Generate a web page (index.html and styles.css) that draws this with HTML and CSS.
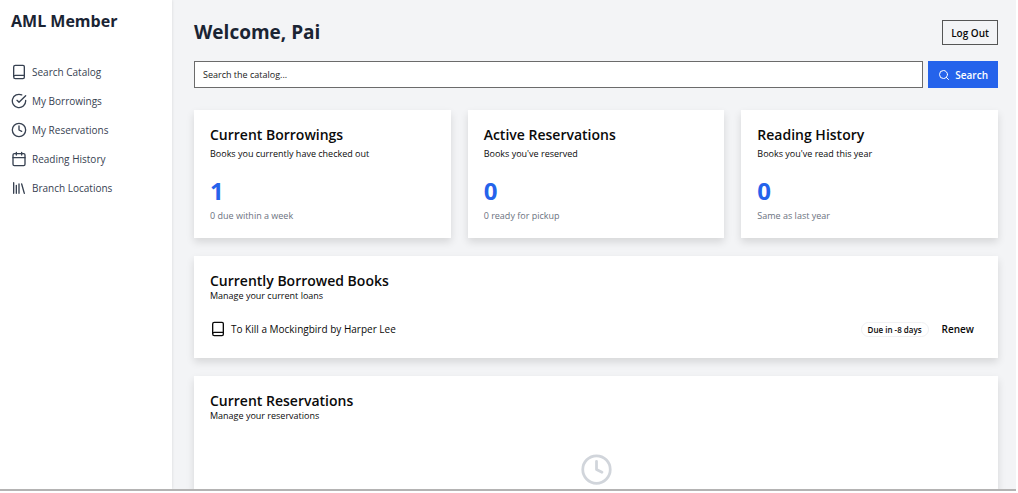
FILE: index.html
```html
<!DOCTYPE html>
<html lang="en">
<head>
<meta charset="utf-8">
<meta name="viewport" content="width=device-width, initial-scale=1">
<title>AML Member</title>
<link rel="stylesheet" href="styles.css">
</head>
<body>
<svg class="sprite" aria-hidden="true">
  <symbol id="book" viewBox="0 0 24 24"><path d="M4 19.500V4.500A2.500 2.500 0 0 1 6.500 2H18a2 2 0 0 1 2 2v16a2 2 0 0 1-2 2H6.500a2.500 2.500 0 0 1 0-5H20"/></symbol>
  <symbol id="check" viewBox="0 0 24 24"><path d="M22 11.100V12a10 10 0 1 1-5.930-9.140"/><path d="m9 11 3 3L22 4"/></symbol>
  <symbol id="clock" viewBox="0 0 24 24"><circle cx="12" cy="12" r="10"/><path d="M12 6v6l4 2"/></symbol>
  <symbol id="calendar" viewBox="0 0 24 24"><path d="M8 2v4M16 2v4M3 10h18"/><rect x="3" y="4" width="18" height="18" rx="2"/></symbol>
  <symbol id="library" viewBox="0 0 24 24"><path d="m16 6 4 14M12 6v14M8 8v12M4 4v16"/></symbol>
  <symbol id="search" viewBox="0 0 24 24"><circle cx="11" cy="11" r="8"/><path d="m21 21-4.300-4.300"/></symbol>
</svg>
<div class="app">
  <aside class="sidebar">
    <h1 class="brand">AML Member</h1>
    <nav class="nav">
      <a class="nav-link" href="#"><svg class="icon"><use href="#book"/></svg>Search Catalog</a>
      <a class="nav-link" href="#"><svg class="icon"><use href="#check"/></svg>My Borrowings</a>
      <a class="nav-link" href="#"><svg class="icon"><use href="#clock"/></svg>My Reservations</a>
      <a class="nav-link" href="#"><svg class="icon"><use href="#calendar"/></svg>Reading History</a>
      <a class="nav-link" href="#"><svg class="icon"><use href="#library"/></svg>Branch Locations</a>
    </nav>
  </aside>
  <main class="main">
    <header class="header">
      <h2 class="welcome">Welcome, Pai</h2>
      <button class="logout" type="button">Log Out</button>
    </header>
    <form class="search">
      <input class="search-input" type="text" placeholder="Search the catalog..." aria-label="Search the catalog">
      <button class="search-button" type="button"><svg class="icon icon-small"><use href="#search"/></svg>Search</button>
    </form>
    <div class="stats">
      <section class="card">
        <h3 class="card-title">Current Borrowings</h3>
        <p class="card-text">Books you currently have checked out</p>
        <p class="stat">1</p>
        <p class="note">0 due within a week</p>
      </section>
      <section class="card">
        <h3 class="card-title">Active Reservations</h3>
        <p class="card-text">Books you've reserved</p>
        <p class="stat">0</p>
        <p class="note">0 ready for pickup</p>
      </section>
      <section class="card">
        <h3 class="card-title">Reading History</h3>
        <p class="card-text">Books you've read this year</p>
        <p class="stat">0</p>
        <p class="note">Same as last year</p>
      </section>
    </div>
    <section class="card card-list">
      <h3 class="card-title">Currently Borrowed Books</h3>
      <p class="card-text">Manage your current loans</p>
      <div class="loan">
        <svg class="icon"><use href="#book"/></svg>
        <span class="loan-title">To Kill a Mockingbird by Harper Lee</span>
        <span class="badge">Due in -8 days</span>
        <button class="renew" type="button">Renew</button>
      </div>
    </section>
    <section class="card card-list">
      <h3 class="card-title">Current Reservations</h3>
      <p class="card-text">Manage your reservations</p>
      <div class="empty"><svg class="icon icon-large"><use href="#clock"/></svg></div>
    </section>
  </main>
</div>
</body>
</html>
```
FILE: styles.css
```css
* {
  box-sizing: border-box;
}

body,
h1,
h2,
h3,
p {
  margin: 0;
}

body,
button,
input {
  font-family: "Segoe UI", "Open Sans", "Noto Sans", sans-serif;
}

body {
  background: #fff;
  color: #0a0a0a;
  font-size: 10px;
}

.sprite {
  display: none;
}

.icon {
  width: 16px;
  height: 16px;
  flex: none;
  fill: none;
  stroke: currentColor;
  stroke-width: 2;
  stroke-linecap: round;
  stroke-linejoin: round;
}

.icon-small {
  width: 12px;
  height: 12px;
}

.icon-large {
  width: 33px;
  height: 33px;
}

.app {
  display: flex;
  height: calc(100vh - 2px);
  margin-right: 2px;
  overflow: hidden;
  border-bottom: 2px solid #b4b3b3;
  background: #f3f4f6;
}

.sidebar {
  flex: none;
  width: 172px;
  padding: 10px 11px;
  background: #fff;
  box-shadow: 0 0 3px rgba(0, 0, 0, 0.12);
}

.brand {
  color: #1a2433;
  font-size: 16px;
  line-height: 22px;
}

.nav {
  display: grid;
  gap: 8px;
  margin-top: 29px;
}

.nav-link {
  display: flex;
  align-items: center;
  gap: 5px;
  height: 21px;
  color: #374151;
  text-decoration: none;
}

.main {
  flex: 1;
  min-width: 0;
  padding: 20px 18px 0 22px;
}

.header {
  display: flex;
  align-items: center;
  justify-content: space-between;
  margin-bottom: 16px;
}

.welcome {
  color: #1a2433;
  font-size: 19px;
  line-height: 25px;
}

.logout {
  height: 25px;
  padding: 0 8px;
  border: 1px solid #555;
  background: transparent;
  color: #0a0a0a;
  font-size: 10px;
  font-weight: 600;
}

.search {
  display: flex;
  gap: 5px;
  margin-bottom: 22px;
}

.search-input {
  flex: 1;
  min-width: 0;
  height: 27px;
  padding: 0 8px;
  border: 1px solid #6b6b6b;
  background: #fff;
  font-size: 9px;
}

.search-input::placeholder {
  color: #222;
}

.search-button {
  display: flex;
  align-items: center;
  gap: 5px;
  padding: 0 10px;
  border: 0;
  background: #2563eb;
  color: #fff;
  font-size: 10px;
  font-weight: 600;
}

.stats {
  display: grid;
  grid-template-columns: repeat(3, 1fr);
  gap: 17px;
}

.card {
  padding: 15px 16px;
  background: #fff;
  box-shadow: 0 4px 8px rgba(0, 0, 0, 0.12);
}

.card-title {
  font-size: 14px;
  font-weight: 600;
  line-height: 20px;
}

.card-text {
  margin-top: 2px;
  font-size: 9px;
  line-height: 14px;
}

.stat {
  margin-top: 16px;
  color: #2563eb;
  font-size: 24px;
  font-weight: 700;
  line-height: 28px;
}

.note {
  margin-top: 4px;
  color: #6b7280;
  font-size: 9px;
  line-height: 14px;
}

.card-list {
  margin-top: 18px;
}

.card-list .card-text {
  margin-top: -2px;
}

.loan {
  display: flex;
  align-items: center;
  height: 28px;
  margin-top: 12px;
}

.loan-title {
  flex: 1;
  margin-left: 5px;
}

.badge {
  padding: 0 6px;
  border: 1px solid #f0f0f2;
  border-radius: 8px;
  font-size: 8px;
  font-weight: 600;
  line-height: 13px;
}

.renew {
  padding: 0 8px;
  margin-left: 5px;
  border: 0;
  background: transparent;
  color: #0a0a0a;
  font-size: 10px;
  font-weight: 600;
}

.empty {
  display: flex;
  justify-content: center;
  padding: 30px 0 80px;
  color: #d1d5db;
}
```
